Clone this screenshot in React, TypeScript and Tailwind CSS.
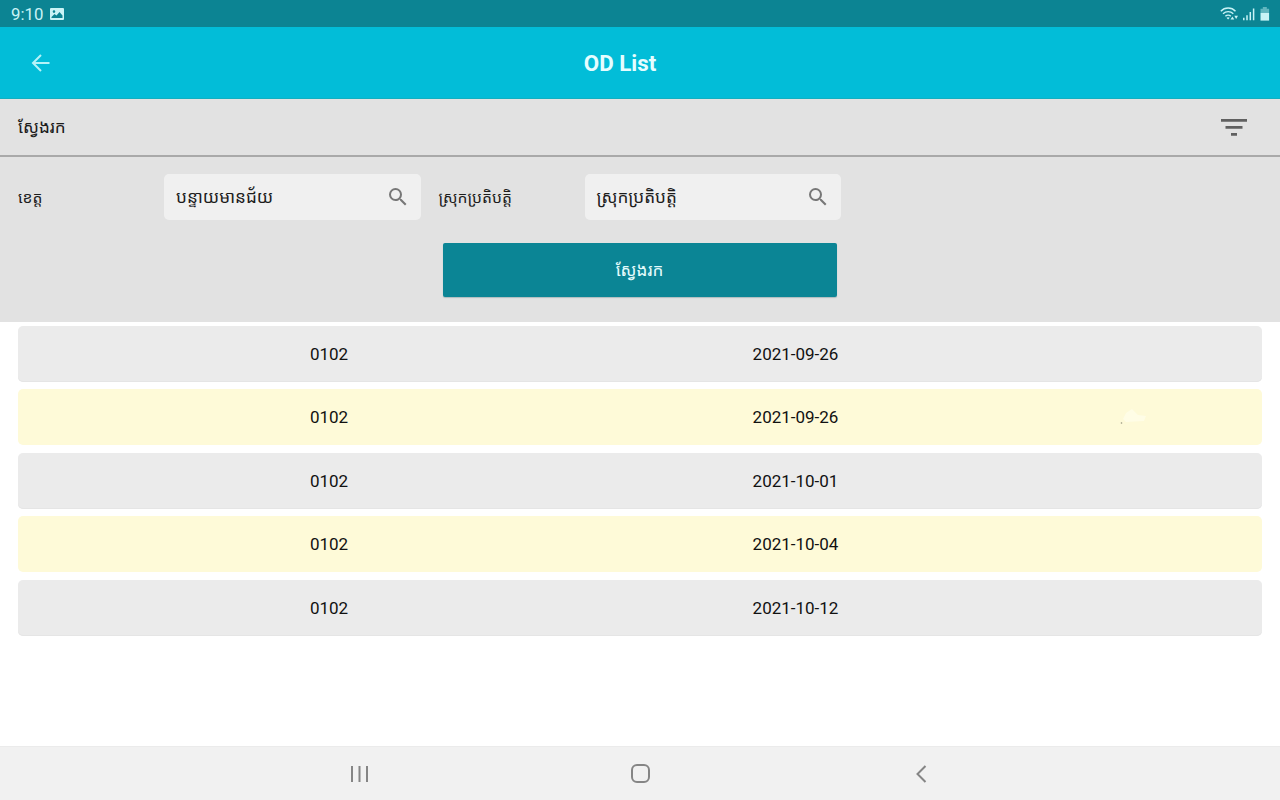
import React from 'react';

const rows = [
  { code: '0102', date: '2021-09-26' },
  { code: '0102', date: '2021-09-26' },
  { code: '0102', date: '2021-10-01' },
  { code: '0102', date: '2021-10-04' },
  { code: '0102', date: '2021-10-12' },
];

function SearchIcon() {
  return (
    <svg viewBox="0 0 24 24" className="size-[24px] shrink-0" fill="#777777">
      <path d="M15.5 14h-.79l-.28-.27A6.471 6.471 0 0 0 16 9.5 6.5 6.5 0 1 0 9.5 16c1.61 0 3.09-.59 4.23-1.57l.27.28v.79l5 4.99L20.49 19l-4.99-5zm-6 0C7.01 14 5 11.99 5 9.5S7.01 5 9.5 5 14 7.01 14 9.5 11.99 14 9.5 14z" />
    </svg>
  );
}

function Field({ value }: { value: string }) {
  return (
    <div className="flex h-[46px] w-[256.500px] shrink-0 items-center justify-between rounded-[5px] bg-[#f0f0f0] pr-[11px] pl-3 text-[17.200px] text-[#1c1c1c]">
      <span className="pt-0.5 whitespace-nowrap">{value}</span>
      <SearchIcon />
    </div>
  );
}

function StatusBar() {
  return (
    <header className="flex h-[27px] items-center justify-between bg-[#0c8493] pr-2.5 pl-[11px] text-[#c9f3f6]">
      <div className="flex items-center gap-[7px] pt-px">
        <span className="pt-px text-[16.800px] leading-none">9:10</span>
        <svg viewBox="0 0 14 12" className="h-3 w-3.5">
          <path
            fill="currentColor"
            fillRule="evenodd"
            d="M1 0h12a1 1 0 0 1 1 1v10a1 1 0 0 1-1 1H1a1 1 0 0 1-1-1V1a1 1 0 0 1 1-1zm.5 10h11V7.500L9.500 4 6.500 7.500 4.500 6 1.500 9zM4 2.300a1.300 1.300 0 1 0 0 2.600 1.300 1.300 0 0 0 0-2.600z"
          />
        </svg>
      </div>
      <svg viewBox="0 0 50 16" className="h-4 w-[50px]" fill="none" stroke="currentColor" strokeWidth="1.4">
        <path d="M.8 5.200C4.800 1 11.500 1 15.500 5.200M3 7.800c3-2.900 7.400-2.900 10.300 0M5.400 10.300c1.600-1.600 3.900-1.600 5.400 0" />
        <path fill="currentColor" stroke="none" d="m8.100 13.500-1.600-1.700c1-.8 2.200-.8 3.200 0zM10.500 13.500l1.900-3 1.900 3zM14.300 9.800h3.700l-1.850 3.200z" />
        <path d="M23.800 11.800v2.500M27 9.300v5M30.300 6v8.300M33.600 2.500v11.800" strokeWidth="1.500" />
        <path fill="currentColor" stroke="none" opacity=".45" d="M42.800 1h4v1.700h2.300v4.100h-8.600V2.700h2.300z" />
        <path fill="currentColor" stroke="none" d="M40.500 6.800h8.600v7.800h-8.600z" />
      </svg>
    </header>
  );
}

export default function App() {
  return (
    <div className="flex h-[800px] w-[1280px] flex-col overflow-hidden bg-white font-['Roboto','Noto_Sans_Khmer','Khmer_OS','Noto_Sans',sans-serif]">
      <StatusBar />
      <div className="flex h-[72px] items-center border-b border-[#12afc0] bg-[#02bdd8] text-[#e5fdff]">
        <div className="flex w-20 justify-center">
          <svg viewBox="0 0 20 18" className="h-[18px] w-5" fill="none" stroke="#b5f3f8" strokeWidth="2">
            <path d="M19.500 9H3M11 1 3 9l8 8" />
          </svg>
        </div>
        <h1 className="w-[1080px] pt-0.5 text-center text-[22.300px] font-bold">OD List</h1>
      </div>

      <div className="flex h-[58px] items-center justify-between border-b-2 border-[#a9a9a9] bg-[#e2e2e2] pr-[33px] pl-[18px]">
        <span className="pt-0.5 text-[17.200px] text-[#1c1c1c]">ស្វែងរក</span>
        <svg viewBox="0 0 26 17" className="h-[17px] w-[26px]" fill="#606060">
          <path d="M0 0h26v2.700H0zM4.500 7h17v2.700h-17zM10 14h6v2.700h-6z" />
        </svg>
      </div>

      <section className="flex h-[165px] flex-col items-center bg-[#e2e2e2] pt-[17px] text-[#1c1c1c]">
        <div className="flex h-[46px] w-full items-center pl-[18px]">
          <span className="w-[146px] shrink-0 pt-px text-[15.700px]">ខេត្ត</span>
          <Field value="បន្ទាយមានជ័យ" />
          <span className="w-[164px] shrink-0 pt-px pl-[18px] text-[15.700px] whitespace-nowrap">ស្រុកប្រតិបត្តិ</span>
          <Field value="ស្រុកប្រតិបត្តិ" />
        </div>
        <button className="mt-[23px] h-[54px] w-[394px] rounded-[2px] bg-[#0b8595] pt-0.5 pr-px text-[17.200px] text-[#e4fbfc] shadow-[0_1px_1px_#aebdbf]">
          ស្វែងរក
        </button>
      </section>

      <main className="flex flex-1 flex-col gap-[7.500px] px-[18px] pt-[3.500px] text-[17px] text-[#111111]">
        {rows.map((row, i) => (
          <div
            key={i}
            className={`flex h-14 shrink-0 items-center rounded-[5px] pt-0.5 ${i % 2 ? 'bg-[#fefad8]' : 'bg-[#ebebeb] shadow-[inset_0_-1px_0_#e5e5e5]'}`}
          >
            <span className="w-[622px] text-center">{row.code}</span>
            <span className="w-[311px] text-center">{row.date}</span>
            {i === 1 && (
              <svg viewBox="0 0 60 24" className="ml-[137px] h-6 w-[60px]">
                <path d="M38 7l6-4 6 6 8 1-2 5-18 1-3-3z" fill="#fffff0" opacity=".6" />
                <circle cx="33.500" cy="17" r=".8" fill="#95957f" />
              </svg>
            )}
          </div>
        ))}
      </main>

      <nav className="flex h-[54px] items-center border-t border-[#ebebeb] bg-[#f1f1f1]">
        <svg viewBox="0 0 18 18" className="ml-[351px] size-[18px]" fill="none" stroke="#858585" strokeWidth="2">
          <path d="M1 1v16M8.500 1v16M16 1v16" />
        </svg>
        <div className="ml-[262px] h-[19px] w-[19px] rounded-[6px] border-2 border-[#858585]" />
        <svg viewBox="0 0 12 18" className="ml-[265px] h-[18px] w-3" fill="none" stroke="#858585" strokeWidth="2">
          <path d="M10.500 1 2.500 9l8 8" />
        </svg>
      </nav>
    </div>
  );
}
